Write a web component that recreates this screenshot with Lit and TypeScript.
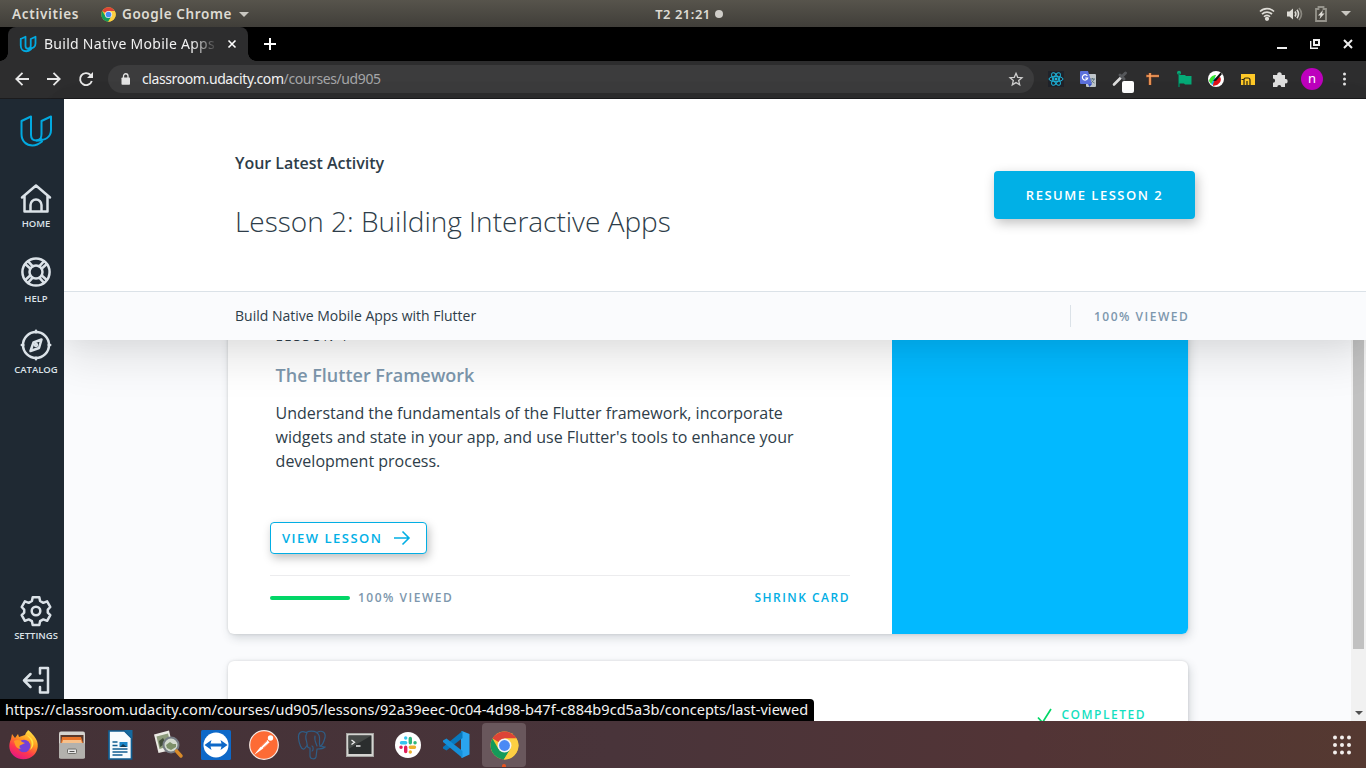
import { LitElement, html, css, svg } from "lit";
import { customElement } from "lit/decorators.js";

const chromeLogo = (size: number) => html`<svg width=${size} height=${size} viewBox="0 0 48 48">
  <circle cx="24" cy="24" r="23" fill="#fbc630" />
  <path d="M24 24L4.1 12.5A23 23 0 0 1 43.9 12.5H24z" fill="#dd4437" />
  <path d="M4.1 12.5A23 23 0 0 0 23 47L34 29.8 24 24 14 29.8z" fill="#149b5a" />
  <path d="M43.9 12.5H24L34 29.8 23 47A23 23 0 0 0 43.9 12.5z" fill="#fccf43" />
  <circle cx="24" cy="24" r="11.5" fill="#f3f3f3" />
  <circle cx="24" cy="24" r="9" fill="#4a8af5" />
</svg>`;

const udacityMark = (size: number, w: number) => html`<svg width=${size} height=${size} viewBox="0 0 32 32" fill="none" stroke="#02a9e0" stroke-width=${w} stroke-linejoin="round" stroke-linecap="round">
  <path d="M1.500 6L11 1.500V20c0 4 2.500 5.500 5.500 5.500 2 0 3.500-.6 5-1.500M1.500 6v13c0 7.500 5 11.500 11 11.500 4 0 6.500-1.500 9.500-4"/>
  <path d="M21.500 6L31 1.500V15c0 7-6 10.500-14.500 10.500 4.500-.5 5-3 5-6.500z"/>
</svg>`;

const sideIcons = {
  home: svg`<path d="M2 14.500L16 2.500l14 12M4.500 13v15.500h23V13M10.500 28.500V22a5.500 5.500 0 0 1 11 0v6.500"/>`,
  help: svg`<circle cx="16" cy="16" r="13.600"/><circle cx="16" cy="16" r="6.500"/><path d="M5.200 8l5 4.500M8 5.200l4.500 5M26.800 8l-5 4.500M24 5.200l-4.500 5M5.200 24l5-4.500M8 26.800l4.500-5M26.800 24l-5-4.500M24 26.800l-4.500-5"/>`,
  catalog: svg`<circle cx="16" cy="16" r="13"/><path d="M16 1.800v1.500M16 28.700v1.500M1.800 16h1.500M28.700 16h1.500M21.500 10.500l-2.500 8.500-8.500 3 3-8.500z"/><circle cx="16" cy="16" r="1" />`,
  settings: svg`<circle cx="16" cy="16" r="4.300"/><path d="M12.700 2.200h6.600l.8 3.800 3.200 1.800 3.800-1.400 3.200 5.600-2.500 2.600v3l2.500 2.500-3.200 5.700-3.800-1.400-3.200 1.800-.8 3.700h-6.600l-.8-3.700-3.200-1.800-3.800 1.400-3.200-5.700 2.500-2.500v-3L1.700 12l3.200-5.600 3.800 1.400L11.900 6z"/>`,
  logout: svg`<path d="M20 9.500V4h8v24.500h-8V23M4 16.500h18.500M10.500 10L4 16.500l6.500 6.500"/>`,
};
const sideIcon = (name: keyof typeof sideIcons) => html`<svg width="32" height="32" viewBox="0 0 32 32" fill="none" stroke="#dbe2e8" stroke-width="2.500" stroke-linejoin="round" stroke-linecap="round">${sideIcons[name]}</svg>`;

const extensions = [
  svg`<rect width="16" height="16" fill="#20232a"/><g fill="none" stroke="#1fb6dc" stroke-width="1"><ellipse cx="8" cy="8" rx="7" ry="2.700"/><ellipse cx="8" cy="8" rx="7" ry="2.700" transform="rotate(60 8 8)"/><ellipse cx="8" cy="8" rx="7" ry="2.700" transform="rotate(120 8 8)"/></g><circle cx="8" cy="8" r="1.500" fill="#1fb6dc"/>`,
  svg`<rect x="6" y="3" width="10" height="13" rx="1" fill="#bfc5ca"/><path d="M10 8h5M12.500 7v1M14 8c-.5 2-2 3-3 4M11.500 9.500c1 1.500 2 2 3 2.500" stroke="#5b7480" fill="none"/><path d="M0 1q0-1 1-1h7l4 13H1q-1 0-1-1z" fill="#5b70dc"/><path d="M8 13h4l-2.500 3z" fill="#3751c4"/><path d="M7.300 4.800A2.700 2.700 0 1 0 7.700 7H5.200" stroke="#fff" stroke-width="1.200" fill="none"/>`,
  svg`<path d="M2 13.500L9 6.500" stroke="#ddd" stroke-width="2.600" stroke-linecap="round"/><path d="M8 4l4 4M10 5.500L13.500 2" stroke="#56585b" stroke-width="3" stroke-linecap="round"/><rect x="10" y="10" width="12" height="12" rx="2" fill="#fff"/>`,
  svg`<path d="M2 5h13M6 2v12" stroke="#7d4325" stroke-width="3.200"/><path d="M2.500 5h12.500M6 2v12" stroke="#ffa45f" stroke-width="1.600"/>`,
  svg`<circle cx="3" cy="1.800" r="2" fill="#05aa77"/><path d="M3 2v14" stroke="#05805d" stroke-width="1.500"/><path d="M3 4h6l1 1h5.500v8.500H9l-1-1H3z" fill="#05aa77"/>`,
  svg`<circle cx="8" cy="8" r="8" fill="#fff"/><path d="M1 10C2 6 5 4 8 4l-2 5-3 4z" fill="#35e82f"/><path d="M3 13l4-7 1 3-3 5z" fill="#17b6e8"/><path d="M5 15c0-5 3-8 7-9 2 3 0 6-3 8z" fill="#e11018"/><path d="M5 10L12.500 1.500 14 3l-6 7z" fill="#111"/>`,
  svg`<rect x="1" y="3" width="14" height="11" fill="#ffc928"/><path d="M1.500 8.500H4V14M4 14V8.500q0-1.500 1.500-1.500H8q2 0 2 2v5M7 14v-4" stroke="#292414" stroke-width="1.200" fill="none"/>`,
  svg`<path d="M1 4h4.200a2.300 2.300 0 1 1 4.500 0H13v4a2.200 2.200 0 1 1 0 4.300V16H9.300a2 2 0 1 0-4 0H1v-4.200a2.100 2.100 0 1 0 0-4.200z" fill="#dedede"/>`,
];

const dockIcons = [
  // Firefox
  html`<svg width="30" height="30" viewBox="0 0 30 30"><defs><linearGradient id="ff" x1=".8" y1="0" x2=".3" y2="1"><stop offset="0" stop-color="#fff04a"/><stop offset=".4" stop-color="#ff9320"/><stop offset=".7" stop-color="#ff394c"/><stop offset="1" stop-color="#e31587"/></linearGradient></defs>
    <path d="M16 5c1-3 3-4 3-5 3 2 4 4 6 6 6 7 4 15 0 19-5 5-14 6-20 1C0 22-1 15 2 9l1-5 3 4 3-4 1 3z" fill="url(#ff)"/><circle cx="15" cy="16" r="6.300" fill="#7441d6"/><path d="M5 11c3-2 7-1 8 1l3 1-4 2c-2 0-2 3 0 4-4 0-6-3-7-8z" fill="#ff9a25"/><path d="M17 5c6 4 7 9 4 15 6-4 4-13-4-15z" fill="#ffe340"/></svg>`,
  // Files
  html`<svg width="28" height="30" viewBox="0 0 28 30"><rect x="1" y="1.500" width="26" height="27" rx="2" fill="#d5d3cf"/><rect x="2.500" y="5" width="23" height="8" fill="#59392c"/><path d="M4 7h19l2 6H3z" fill="#e8742a"/><path d="M5 10h18l1 3H4z" fill="#f7c08a"/><rect x="1" y="13" width="26" height="15.500" rx="1" fill="#b3b1ad"/><rect x="9.500" y="19" width="9" height="4.500" rx="1" fill="#e7e7e7" stroke="#6f6e6a"/><path d="M11.500 21.500h5" stroke="#555"/></svg>`,
  // LibreOffice Writer
  html`<svg width="26" height="30" viewBox="0 0 26 30"><path d="M2 1h15.500L24.500 8v21H2z" fill="#f8fbfd" stroke="#105d91" stroke-width="1.700"/><path d="M17 0h8.500v8.500z" fill="#14699f"/><path d="M5.500 12h5M5.500 15.500h5M5.500 19h15M5.500 22h15M5.500 25h10" stroke="#125e90" stroke-width="1.600"/><rect x="12.500" y="12" width="8" height="5" fill="#1c86c9"/><path d="M13 17l3-3 4 3z" fill="#143c55"/></svg>`,
  // Image viewer
  html`<svg width="30" height="30" viewBox="0 0 30 30"><path d="M1 4.500L16 .5l4.500 19L5.500 23z" fill="#ecebe5"/><path d="M3.500 6.500L15 3.500l3 12L6.500 19z" fill="#8d9b7b"/><path d="M6 11l4-3 3 5-6 4z" fill="#444f3b"/><circle cx="18" cy="15" r="7.500" fill="#d3dacf" stroke="#767c84" stroke-width="2"/><path d="M13 15l4-3 3 2 3 0v3l-5 3-4-2z" fill="#7d9069"/><path d="M23.500 21l4.500 5" stroke="#d88b2a" stroke-width="3.500" stroke-linecap="round"/></svg>`,
  // TeamViewer
  html`<svg width="30" height="30" viewBox="0 0 30 30"><rect width="30" height="30" rx="1.500" fill="#0d68c8"/><circle cx="15" cy="15" r="12.500" fill="#fff"/><path d="M3.500 15l7-5-1 3.500h11l-1-3.500 7 5-7 5 1-3.500h-11l1 3.500z" fill="#0d68c8"/></svg>`,
  // Postman
  html`<svg width="30" height="30" viewBox="0 0 30 30"><circle cx="15" cy="15" r="14.300" fill="#fd6b35" stroke="#f7eae5" stroke-width="1.200"/><circle cx="21.500" cy="8" r="2.700" fill="#fff"/><path d="M18.500 10l2 2.500-7 6.500-8.500 6 6-7.500z" fill="#fff"/><path d="M12 17l6-6M14 18l6-5" stroke="#fd8b60" stroke-width=".8"/></svg>`,
  // PostgreSQL
  html`<svg width="30" height="30" viewBox="0 0 30 30" fill="none" stroke="#2f5d85" stroke-width="1.200" stroke-linecap="round"><path d="M9 2.500C4 0 1 3 1.500 8c.5 6 3 12 5.500 11 2-1 2-3 3.500-4M9 2.500c4-2 7-2 11 0 5-3 9 0 8 5-1 4-3 8-5 9M10 3c-3 4 0 8 0 11 0 3 1 4 3 4v8c0 3 5 4 6 1l1-8c3 0 6 0 8-2l-5-1c-2-4 2-10-3-13M15 16c2 1 1 5 0 5M18 6c-1 4 1 7 2 10"/></svg>`,
  // Terminal
  html`<svg width="28" height="24" viewBox="0 0 28 24"><rect x=".5" y=".5" width="27" height="23" fill="#d5d4d1" stroke="#a3a3a0"/><rect x="2.500" y="2.500" width="23" height="18.500" fill="#2b2e2e"/><path d="M2.500 2.500h23L2.500 16z" fill="#454947"/><path d="M5.500 7l3 2.200-3 2.200M10 13h4.500" fill="none" stroke="#eee" stroke-width="1.300"/></svg>`,
  // Slack
  html`<svg width="26" height="26" viewBox="0 0 26 26"><circle cx="13" cy="13" r="13" fill="#fff"/><g stroke-width="3.400" stroke-linecap="round"><path d="M6.500 10.700h4.200M10.700 6v.1" stroke="#36c5f0"/><path d="M15.300 6.500v4.200M20 10.700h.1" stroke="#2eb67d"/><path d="M15.300 15.300h4.200M15.300 20v.1" stroke="#ecb22e"/><path d="M10.700 15.300v4.200M6 15.300h.1" stroke="#e01e5a"/></g></svg>`,
  // VS Code
  html`<svg width="27" height="27" viewBox="0 0 27 27"><path d="M19 0l7.500 3v20.500L19 27l-1-1V1z" fill="#2aa4ee"/><path d="M19.500 0v7L3.500 19.500 0 17.500V16z" fill="#0878bd"/><path d="M19.500 27v-7L3.500 7.500 0 9.500V11z" fill="#158fd8"/></svg>`,
  chromeLogo(29),
];

@customElement("app-root")
export class AppRoot extends LitElement {
  static styles = css`
    :host { display: block; width: 1366px; height: 768px; overflow: hidden; font-family: "Open Sans", "Noto Sans", sans-serif; color: #2e3d49; }
    * { box-sizing: border-box; }
    svg { display: block; flex: none; overflow: visible; }
    .screen { position: relative; display: flex; flex-direction: column; height: 768px; }
    .sys { font-family: "Noto Sans", "Open Sans", sans-serif; white-space: nowrap; }

    .panel { height: 27px; display: grid; grid-template-columns: 1fr auto 1fr; align-items: center; background: linear-gradient(#57544c, #403e39); color: #dedbd3; font-weight: 600; font-size: 13.500px; line-height: 25px; }
    .panel-left { display: flex; align-items: center; padding-left: 12px; line-height: 27px; }
    .activities, .app-name { padding-top: 1px; }
    .activities { width: 89px; letter-spacing: 0.700px; }
    .app-name { margin-left: 6px; width: 112px; letter-spacing: 0.600px; }
    .caret { width: 0; height: 0; border: 5px solid transparent; border-top-color: #c9c7c1; border-bottom: 0; margin-left: 5px; }
    .clock { display: flex; align-items: center; gap: 4px; padding-left: 12px; font-size: 13px; letter-spacing: 0.500px; }
    .dot { width: 8px; height: 8px; border-radius: 50%; background: #cfcdc8; }
    .tray { display: flex; justify-content: flex-end; align-items: center; padding: 0 15px 1px 0; }
    .tray svg { margin-right: 12px; }
    .tray .caret { margin-left: 2px; }

    .tabs { height: 34px; background: #000; display: flex; align-items: center; color: #f1f1f1; }
    .tab { margin-left: 8px; width: 240px; height: 34px; border-radius: 8px 8px 0 0; background: #2d2d2e; display: flex; align-items: center; padding-left: 12px; position: relative; }
    .tab::before, .tab::after { content: ""; position: absolute; bottom: 0; width: 8px; height: 8px; }
    .tab::before { left: -8px; background: radial-gradient(circle at 0 0, #000 7.500px, #2d2d2e 8px); }
    .tab::after { right: -8px; background: radial-gradient(circle at 100% 0, #000 7.500px, #2d2d2e 8px); }
    .tab-title { margin-left: 8px; width: 176px; overflow: hidden; font-size: 14px; line-height: 34px; letter-spacing: 0.270px; mask-image: linear-gradient(90deg, #000 84%, transparent 99%); }
    .close { margin-left: 8px; }
    .plus { margin-left: 16px; }
    .window-buttons { margin-left: auto; display: flex; align-items: center; gap: 23px; padding-right: 13px; }

    .toolbar { height: 38px; background: #2d2d2e; border-bottom: 1px solid #1b1b1d; padding-bottom: 1px; display: flex; align-items: center; }
    .nav { display: flex; gap: 18px; padding-left: 15px; width: 108px; }
    .omnibox { width: 926px; height: 28px; border-radius: 14px; background: #3c3c3d; display: flex; align-items: center; padding: 0 11px 0 13px; font-size: 14px; color: #a5a6a8; }
    .url { margin-left: 11px; letter-spacing: -0.400px; line-height: 20px; padding-bottom: 1px; }
    .url b { font-weight: 400; color: #f2f2f2; }
    .star { margin-left: auto; }
    .extensions { display: flex; align-items: center; gap: 16px; padding-left: 14px; }
    .avatar { width: 22px; height: 22px; margin: 0 -3px; border-radius: 50%; background: #bd00bd; color: #fff; text-align: center; font-size: 13px; line-height: 21px; }

    .content { height: 622px; display: flex; }
    .sidebar { width: 64px; background: #1f2933; padding: 16px 0 0 8px; display: flex; flex-direction: column; align-items: center; z-index: 3; color: #dbe2e8; font-size: 9.500px; font-weight: 600; line-height: 12px; }
    .item { display: flex; flex-direction: column; align-items: center; gap: 3px; white-space: nowrap; }
    .home { margin-top: 36px; }
    .help { margin-top: 26px; gap: 5px; }
    .catalog { margin-top: 24px; gap: 3px; }
    .settings { margin-top: auto; margin-bottom: 22px; }
    .logout { height: 57px; }

    .page { flex: 1; min-width: 0; display: flex; flex-direction: column; background: #fafbfd; }
    .head { position: relative; z-index: 2; background: #fff; box-shadow: 0 20px 40px rgba(0, 0, 0, 0.100), 0 0 24px rgba(0, 0, 0, 0.050); }
    .hero { height: 192px; display: flex; justify-content: space-between; padding: 53px 171px 0; }
    .eyebrow { font-size: 16px; line-height: 22px; font-weight: 600; letter-spacing: -0.020px; }
    .lesson { font-size: 28px; line-height: 40px; font-weight: 300; margin-top: 27px; white-space: nowrap; }
    .resume { margin-top: 19px; width: 201px; height: 48px; border-radius: 4px; background: #01b0e6; color: #fff; font-size: 13px; font-weight: 600; letter-spacing: 1.500px; line-height: 48px; text-align: center; box-shadow: 2px 4px 12px rgba(0, 0, 0, 0.250); white-space: nowrap; }
    .subhead { height: 49px; border-top: 1px solid #dbe2e8; background: #fafbfd; display: flex; align-items: center; justify-content: space-between; padding: 0 177px 0 171px; font-size: 14px; white-space: nowrap; }
    .course { padding-bottom: 2px; }
    .caps { font-size: 12px; font-weight: 600; letter-spacing: 1.500px; color: #7d97ad; white-space: nowrap; }
    .viewed { border-left: 1px solid #dbe2e8; width: 119px; height: 22px; line-height: 24px; padding-left: 23px; }

    .body { height: 381px; display: flex; justify-content: space-between; padding-left: 164px; overflow: hidden; }
    .cards { width: 960px; margin-top: -40px; }
    .card { display: flex; height: 334px; border-radius: 6px; background: #fff; box-shadow: 2px 4px 10px rgba(46, 61, 73, 0.180), 0 0 3px rgba(0, 0, 0, 0.140); }
    .info { width: 664px; padding: 26px 42px 0; }
    .text { padding-left: 5.600px; }
    .number { font-size: 13px; line-height: 20px; letter-spacing: 1.900px; }
    .title { margin-top: 17px; font-size: 18px; line-height: 24px; font-weight: 600; color: #7d97ad; }
    .desc { margin-top: 14px; font-size: 16px; line-height: 24px; white-space: nowrap; }
    .view { margin-top: 49px; width: 157px; height: 32px; border: 1px solid #02aee4; border-radius: 4px; display: flex; align-items: center; padding-left: 11px; gap: 11px; background: #fff; color: #02b0e6; font-size: 13px; font-weight: 600; letter-spacing: 1.500px; box-shadow: 2px 4px 10px rgba(0, 0, 0, 0.250); white-space: nowrap; }
    .foot { margin-top: 21px; width: 580px; height: 45px; border-top: 1px solid #ececee; display: flex; align-items: center; }
    .foot .caps { padding-bottom: 2px; }
    .bar { width: 80px; height: 4px; border-radius: 2px; background: #02d667; margin-right: 8px; }
    .foot .shrink { margin-left: auto; color: #02aee4; }
    .art { flex: 1; background: #02b9ff; border-radius: 0 6px 6px 0; }
    .next { margin-top: 27px; height: 200px; justify-content: flex-end; padding: 44px 42px 0 0; }
    .completed { display: flex; align-items: center; gap: 9px; height: 18px; color: #15dfc0; }
    .completed svg { margin-top: 2px; }
    .scroll { width: 15px; background: #f1f1f1; display: flex; flex-direction: column; justify-content: space-between; align-items: center; padding-bottom: 6px; }
    .thumb { width: 11px; height: 309px; background: #c1c1c1; }
    .down { width: 0; height: 0; border: 4px solid transparent; border-top: 4px solid #505050; border-bottom: 0; }

    .status { position: absolute; z-index: 5; left: 0; top: 699px; width: 814px; height: 22px; border-radius: 0 4px 0 0; background: #000; color: #f3f3f3; padding-left: 5px; font-size: 14.500px; line-height: 21px; letter-spacing: 0.040px; }
    .dock { height: 47px; background: linear-gradient(90deg, #443237, #49343a 45%, #523436 75%, #553931); display: flex; align-items: center; }
    .launcher { width: 48px; height: 47px; display: flex; align-items: center; justify-content: center; }
    .active { position: relative; width: 44px; height: 44px; margin: 1px 2px 0; border-radius: 4px; background: #69575c; }
    .active::after { content: ""; position: absolute; left: 20px; bottom: 0; width: 4px; height: 3px; border-radius: 2px 2px 0 0; background: #e95420; }
    .grid { margin: 0 15px 0 auto; }
  `;

  render() {
    return html`<div class="screen">
      <div class="panel sys">
        <div class="panel-left"><span class="activities">Activities</span>${chromeLogo(15)}<span class="app-name">Google Chrome</span><span class="caret"></span></div>
        <div class="clock">T2 21:21<span class="dot"></span></div>
        <div class="tray">
          <svg width="16" height="14" viewBox="0 0 16 14" fill="none" stroke="#dedcd6" stroke-width="1.700"><path d="M1 4.500a10 10 0 0 1 14 0M3 7.200a7 7 0 0 1 10 0M5 9.700a4 4 0 0 1 6 0"/><circle cx="8" cy="11.800" r="1.300" fill="#dedcd6"/></svg>
          <svg width="16" height="14" viewBox="0 0 16 14" fill="none" stroke="#dedcd6" stroke-width="1.600"><path d="M0 4.500h2.500L6 1.500v11l-3.500-3H0z" fill="#dedcd6" stroke="none"/><path d="M8 4.500q1.700 2.500 0 5M10 2.800q3 4.200 0 8.400"/><path d="M12 1q5 6 0 12" stroke="#8a8880"/></svg>
          <svg width="12" height="16" viewBox="0 0 12 16"><path d="M1 3h2.500V1h5v2H11v12H1z" fill="none" stroke="#96948c" stroke-width="1.800"/><path d="M8 4L3 9.500h2.500L4.500 13 9.500 7.500H7z" fill="#dedcd6"/></svg>
          <span class="caret"></span>
        </div>
      </div>

      <div class="tabs sys">
        <div class="tab">${udacityMark(16, 3.600)}<span class="tab-title">Build Native Mobile Apps with Flutter</span>
          <svg class="close" width="8" height="8" viewBox="0 0 8 8" stroke="#fff" stroke-width="1.600"><path d="M.5.5l7 7M7.500.5l-7 7"/></svg></div>
        <svg class="plus" width="12" height="12" viewBox="0 0 12 12" stroke="#fff" stroke-width="2"><path d="M6 0v12M0 6h12"/></svg>
        <div class="window-buttons">
          <svg width="10" height="10" viewBox="0 0 10 10"><path d="M0 9h10" stroke="#eee" stroke-width="2"/></svg>
          <svg width="10" height="10" viewBox="0 0 10 10" fill="none" stroke="#eee"><rect x="4" y="1" width="5" height="5" stroke-width="2"/><path d="M.7 2v7.300H8" stroke-width="1.400"/></svg>
          <svg width="10" height="10" viewBox="0 0 10 10" stroke="#eee" stroke-width="2"><path d="M1 1l8 8M9 1L1 9"/></svg>
        </div>
      </div>

      <div class="toolbar sys">
        <div class="nav">
          <svg width="14" height="14" viewBox="0 0 14 14" fill="none" stroke="#e8e8e8" stroke-width="1.800"><path d="M14 7H1.500M7.500.8L1.300 7l6.200 6.200"/></svg>
          <svg width="14" height="14" viewBox="0 0 14 14" fill="none" stroke="#e8e8e8" stroke-width="1.800"><path d="M0 7h12.500M6.500.8L12.700 7l-6.200 6.200"/></svg>
          <svg width="14" height="14" viewBox="0 0 14 14" fill="none" stroke="#e8e8e8" stroke-width="1.900"><path d="M12.800 9A6 6 0 1 1 11.500 3"/><path d="M14 0v6H8z" fill="#e8e8e8" stroke="none"/></svg>
        </div>
        <div class="omnibox">
          <svg width="10" height="12" viewBox="0 0 10 12"><rect x=".5" y="4.500" width="8.500" height="7.200" rx=".8" fill="#e3e3e3"/><path d="M2.500 5V3a2.250 2.250 0 0 1 4.500 0v2" fill="none" stroke="#e3e3e3" stroke-width="1.300"/></svg>
          <span class="url"><b>classroom.udacity.com</b>/courses/ud905</span>
          <svg class="star" width="14" height="14" viewBox="0 0 14 14" fill="none" stroke="#cfcfcf" stroke-width="1.300"><path d="M7 1.300l1.700 4 4.300.4-3.300 2.900 1 4.200L7 10.600l-3.700 2.200 1-4.200L1 5.700l4.300-.4z"/></svg>
        </div>
        <div class="extensions">
          ${extensions.map((e) => html`<svg width="16" height="16" viewBox="0 0 16 16">${e}</svg>`)}
          <div class="avatar">n</div>
          <svg width="16" height="16" viewBox="0 0 16 16" fill="#e3e3e3"><circle cx="8.500" cy="3" r="1.500"/><circle cx="8.500" cy="8" r="1.500"/><circle cx="8.500" cy="13" r="1.500"/></svg>
        </div>
      </div>

      <div class="content">
        <nav class="sidebar">
          ${udacityMark(32, 2)}
          <div class="item home">${sideIcon("home")}<span>HOME</span></div>
          <div class="item help">${sideIcon("help")}<span>HELP</span></div>
          <div class="item catalog">${sideIcon("catalog")}<span>CATALOG</span></div>
          <div class="item settings">${sideIcon("settings")}<span>SETTINGS</span></div>
          <div class="item logout">${sideIcon("logout")}</div>
        </nav>
        <main class="page">
          <header class="head">
            <div class="hero">
              <div><div class="eyebrow">Your Latest Activity</div><div class="lesson">Lesson 2: Building Interactive Apps</div></div>
              <div class="resume">RESUME LESSON 2</div>
            </div>
            <div class="subhead"><span class="course">Build Native Mobile Apps with Flutter</span><span class="caps viewed">100% VIEWED</span></div>
          </header>
          <div class="body">
            <div class="cards">
              <section class="card">
                <div class="info">
                  <div class="text">
                    <div class="number">LESSON 1</div>
                    <div class="title">The Flutter Framework</div>
                    <div class="desc">Understand the fundamentals of the Flutter framework, incorporate<br />widgets and state in your app, and use Flutter's tools to enhance your<br />development process.</div>
                  </div>
                  <div class="view">VIEW LESSON<svg width="16" height="14" viewBox="0 0 16 14" fill="none" stroke="#02aee4" stroke-width="1.600"><path d="M0 7h15M8.500.5L15 7l-6.500 6.500"/></svg></div>
                  <div class="foot"><span class="bar"></span><span class="caps">100% VIEWED</span><span class="caps shrink">SHRINK CARD</span></div>
                </div>
                <div class="art"></div>
              </section>
              <section class="card next">
                <div class="caps completed"><svg width="16" height="16" viewBox="0 0 16 16" fill="none" stroke="#02d667" stroke-width="1.700"><path d="M1 10.500l4.500 5L14 2"/></svg>COMPLETED</div>
              </section>
            </div>
            <div class="scroll"><div class="thumb"></div><div class="down"></div></div>
          </div>
        </main>
      </div>

      <div class="dock">
        ${dockIcons.map((icon, i) => html`<div class="launcher ${i === dockIcons.length - 1 ? "active" : ""}">${icon}</div>`)}
        <svg class="grid" width="18" height="20" viewBox="0 0 18 20" fill="#f3efed">${[2, 9, 16].map((x) => [2.500, 10, 17.500].map((y) => svg`<circle cx=${x} cy=${y} r="2"/>`))}</svg>
      </div>
      <div class="status sys">https://classroom.udacity.com/courses/ud905/lessons/92a39eec-0c04-4d98-b47f-c884b9cd5a3b/concepts/last-viewed</div>
    </div>`;
  }
}
